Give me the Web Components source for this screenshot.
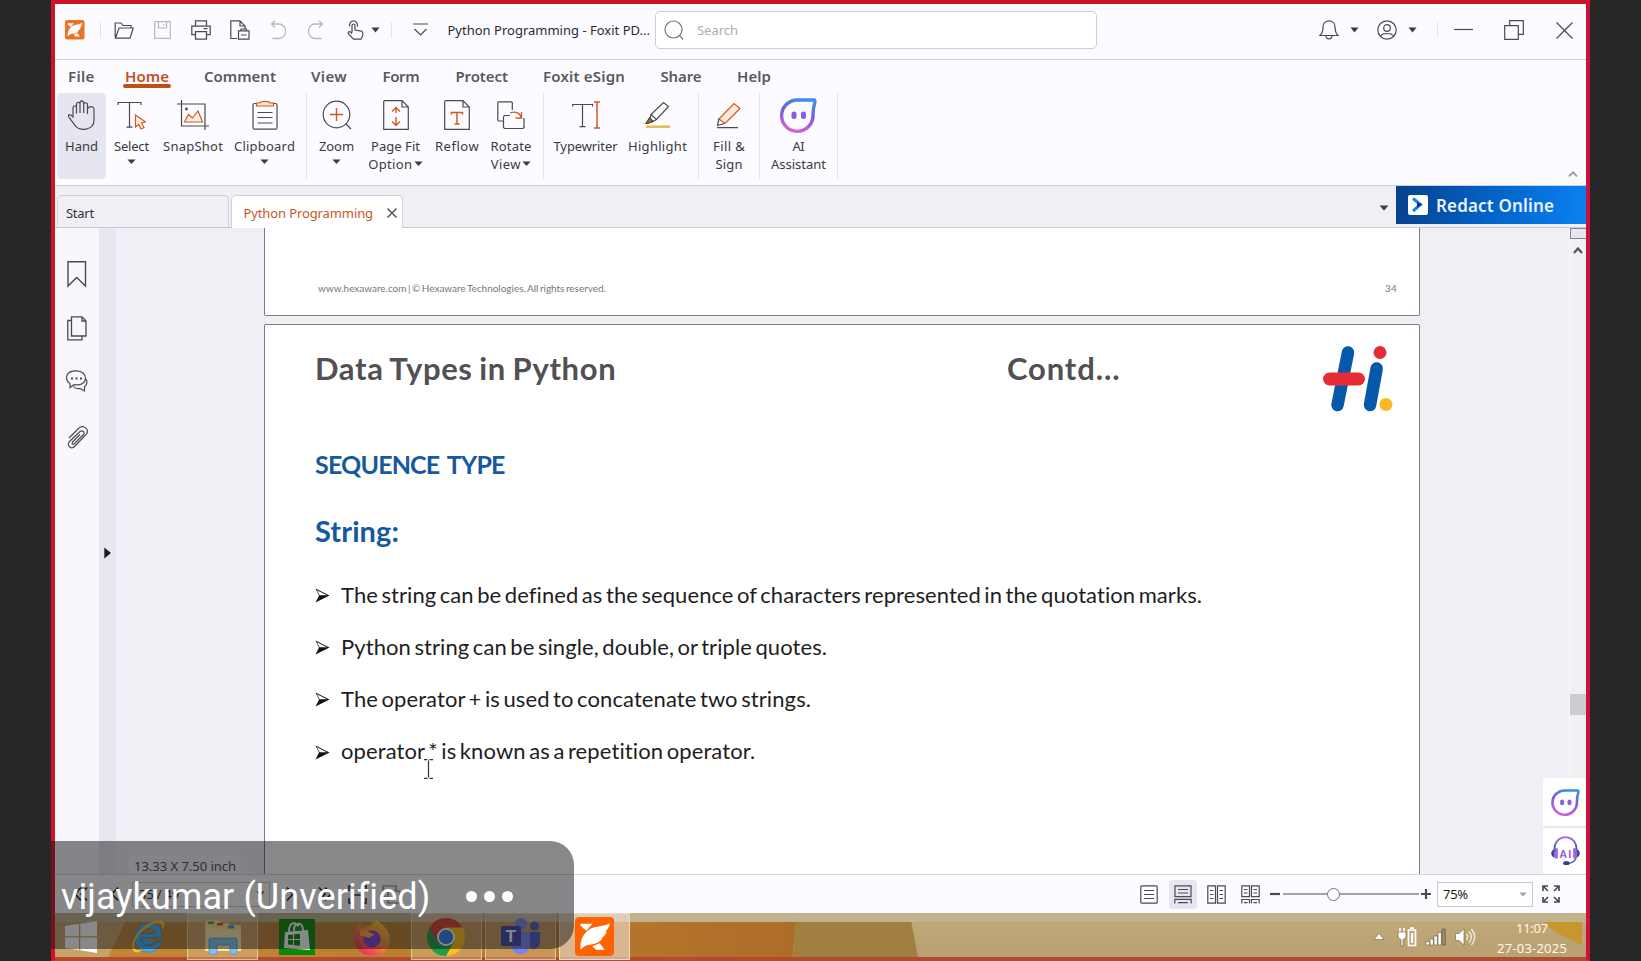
<!DOCTYPE html>
<html lang="en">
<head>
<meta charset="utf-8">
<title>Python Programming - Foxit PDF Reader</title>
<style>
html,body{margin:0;height:100%;background:#272727;overflow:hidden}
</style>
</head>
<body>
<shared-screen></shared-screen>
<script>
const define=(name,html,after)=>{
  const t=document.createElement('template');t.innerHTML=html;
  customElements.define(name,class extends HTMLElement{
    constructor(){super();this.attachShadow({mode:'open'}).append(t.content.cloneNode(true));}
    connectedCallback(){after&&after(this,this.shadowRoot);}
  });
};

/* One line of text whose tracking is tuned to fill a given width. */
define('fit-text',`<style>:host{display:inline-block;white-space:pre;flex:none}span{display:inline-block}</style><span></span>`,(el,root)=>{
  const s=root.querySelector('span'),w=+el.getAttribute('w'),f=el.getAttribute('size');
  s.textContent=el.getAttribute('text');
  if(f)el.style.fontSize=f+'px';
  el.style.width=w+'px';
  const n=s.textContent.length-1,nat=s.getBoundingClientRect().width;
  if(n>0)s.style.letterSpacing=((w-nat)/(n+0.5)).toFixed(3)+'px';
});

const ai=(id)=>`<defs><linearGradient id="${id}" x1=".7" y1="0" x2=".4" y2="1"><stop offset="0" stop-color="#3d8fe8"/><stop offset=".45" stop-color="#7a5cdc"/><stop offset="1" stop-color="#cf63d8"/></linearGradient></defs><path d="M33.5 2H17.5A15.7 15.7 0 1 0 32 17.500C32 11 33 7 34 3.500Z" stroke="url(#${id})" stroke-width="3.400" stroke-linejoin="round"/><rect x="10.500" y="13.500" width="5" height="7.500" rx="2.500" fill="#8460e0" stroke="none"/><rect x="20" y="13.500" width="5" height="7.500" rx="2.500" fill="#8460e0" stroke="none"/>`;
const foxit=(c)=>`<rect width="38" height="38" rx="4" fill="${c}" stroke="none"/><path d="M5 8C5 6.500 6 6.500 7 6.500H17L11 13.500ZM34 6C33 10 32 12 29.500 14.500H31C29.500 17.500 28 19 25.500 20.500H27C24 25 20 26.500 14 27C11 27.500 8 29 5.500 32C4.500 23 8 15 16 11C22 8.500 29 9 34 6ZM17 28.500L24 25.500L29 32H20.500Z" fill="#fff" stroke="none"/>`;
const ICONS={
  logo:['0 0 38 38',foxit('#ec7227')],
  foxit:['0 0 38 38',foxit('#ff6200')],
  open:['0 0 20 19','<path d="M1.200 16.500V2H7L9 4.500H17V7M1.500 17.200L5 7H19.200L16 17.200Z"/>'],
  save:['0 0 17 18','<path d="M.7.7H16.300V17.300H.7ZM4.500.7V7H12.500V.7M10 3V4.500" stroke="#b9b8c0"/>'],
  print:['0 0 20 20','<path d="M4.500 6V.8H15.500V6M4.500 14.500H.8V6H19.200V14.500H15.500M4.500 11.500H15.500V19.200H4.500ZM12.500 8.700H16.500" stroke-width="1.250"/>'],
  convert:['0 0 20 20','<path d="M7 18.500H.8V.8H10L15 6V9M10 .8V6H15M8.500 10.800H19V19.200H8.500ZM11 10.800V9H16.500V10.800M11 15H16.500" stroke-width="1.200"/>'],
  undo:['0 0 17 20','<path d="M5 .8L1.500 4L5 7.500M1.500 4H8.500C18 4 18 18.500 8.500 18.500H2.500" stroke="#b9b8c0" stroke-width="1.300"/>'],
  redo:['0 0 17 20','<path d="M12 .8L15.500 4L12 7.500M15.500 4H8.500C-1 4 -1 18.500 8.500 18.500H14.500" stroke="#b9b8c0" stroke-width="1.300"/>'],
  touch:['0 0 17 20','<path d="M5 12.500V5.500C5 3.500 8 3.500 8 5.500V10L14.500 11.200C16.500 11.800 16 14 15.500 16L14 19.200H6.500L1.200 13.500C.8 12 2.500 11 3.500 12L5 13.500M2.500 6.500C1.500 -1 11.500 -1 10.500 6.500"/>'],
  caret:['0 0 10 6','<path d="M.5.500H9.500L5 5.500Z" fill="#3b3b40" stroke="none"/>'],
  graycaret:['0 0 10 6','<path d="M.5.500H9.500L5 5.500Z" fill="#a0a0a6" stroke="none"/>'],
  more:['0 0 15 14','<path d="M0 1H15M1.500 6L7.500 12L13.500 6"/>'],
  search:['0 0 20 20','<circle cx="9.500" cy="9.500" r="8.500" stroke="#77777c"/><path d="M15.700 15.700L19 19.500" stroke="#77777c"/>'],
  bell:['0 0 20 20','<path d="M1 15.500C3.500 13 4 11 4 7C4-1.200 16-1.200 16 7C16 11 16.500 13 19 15.500ZM7 15.500C7 20 13 20 13 15.500"/>'],
  user:['0 0 20 20','<circle cx="10" cy="10" r="9.200"/><circle cx="10" cy="8" r="3.300"/><path d="M3.500 16.500C5 12.500 15 12.500 16.500 16.500"/>'],
  min:['0 0 19 20','<path d="M0 9.500H19"/>'],
  restore:['0 0 20 20','<path d="M.7 5.700H14.300V19.300H.7ZM5.700 5.500V.7H19.300V14.300H14.500"/>'],
  close:['0 0 17 17','<path d="M.5.500L16.500 16.500M16.500.500L.5 16.500"/>'],
  hand:['0 0 30 30','<path d="M6 17.500V8C6 5 9.500 5 9.500 8V13.500V4.500C9.500 1.500 13 1.500 13 4.500V13V3.200C13 0 16.700 0 16.700 3.200V13V5C16.700 2 20.500 2 20.500 5V14V9.500C20.500 6.500 27 5 27 9.500V20C27 31 12 31 9 26.500C6 23 4 20 1.500 16.500C1 14 4 13.500 6 17.500"/>'],
  select:['0 0 30 30','<path d="M1 5V2.500H24V5M12.500 2.500V27M9.500 27.200H15.500"/><path d="M18.500 15L28.500 22L24.500 23L27 27.500L24 29L21.700 24.500L18.500 27Z" stroke="#cf5a26" fill="#fff0e4"/>'],
  snapshot:['0 0 32 30','<path d="M0 4H28V27M4.500 0V26H32M28 22V30"/><circle cx="9.500" cy="9" r=".8" fill="#444"/><path d="M7.500 22L11.500 14.500L15.500 18L21 11L25.500 22Z" stroke="#cf5a26" fill="#fff0e4"/>'],
  clipboard:['0 0 26 30','<rect x="1" y="3.500" width="24" height="25.700" rx="1.500"/><path d="M5.500 12.500H20.500M5.500 17.500H20.500M5.500 23H20.500"/><path d="M4.500 6V3H8C8.500 .8 17.500 .8 18 3H21.500V6Z" stroke="#cf5a26" fill="#ffe5cc"/>'],
  zoom:['0 0 30 30','<circle cx="14.500" cy="14.500" r="13.300"/><path d="M24 24L29 29"/><path d="M8 14.500H21M14.500 8V21" stroke="#cf5a26" stroke-width="1.400"/>'],
  pagefit:['0 0 26 30','<path d="M1.500.7H19L25.300 7V29.300H.7V1.500ZM19 .7V7H25.300"/><path d="M13 8V13M13 17V25M9 11.500L13 7.500L17 11.500M9 21.500L13 25.500L17 21.500" stroke="#cf5a26" stroke-width="1.400"/>'],
  reflow:['0 0 26 30','<path d="M1.500.7H19L25.300 7V29.300H.7V1.500ZM19 .7V7H25.300"/><path d="M7.500 14.500V12.500H18.500V14.500M13 12.500V24M10.500 24H15.500" stroke="#cf5a26" stroke-width="1.500"/>'],
  rotate:['0 0 28 29','<path d="M6 20H1.500L.8 19V1.500L1.500.8H14.500L15.300 1.500V9M6.500 15.500L7.500 14.500H13M27 17V26.500L26 27.500H7.500L6.500 26.500V15.500"/><path d="M13 12C19 10 23.500 12 24 17M24.500 11V17H18.500" stroke="#cf5a26" stroke-width="1.300"/>'],
  type:['0 0 28 28','<path d="M.7 5.500V3.500H20.500V5.500M10.500 3.500V25.500M7.500 25.700H13.500"/><path d="M25 1V27M22 1H28M22 27H28" stroke="#cf5a26" stroke-width="1.500"/>'],
  highlight:['0 0 26 28','<path d="M6 13.500L18.500 1.500L23.500 5.500L11.500 18.500ZM6 13.500L4.500 19L7 21L11.500 18.500"/><path d="M4.500 17L8 20L3 22.500H1Z" fill="#9a7a22" stroke="#4a4530"/><path d="M1 25.700H25" stroke="#e3bd47" stroke-width="2.400"/>'],
  fill:['0 0 26 27','<path d="M3 17L18 1.500L24 6.500L9 21.500Z" stroke="#cf5a26" fill="#ffe9d6"/><path d="M3 16.500L1.500 23.500L8.500 21.500M1 25.700H22"/>'],
  ai:['0 0 36 35',ai('g')],
  headset:['0 0 32 32','<defs><linearGradient id="h" x1="0" x2="0" y1="0" y2="1"><stop stop-color="#b06be0"/><stop offset="1" stop-color="#2d4fa8"/></linearGradient></defs><path d="M4 16C2-3.500 30-3.500 28 16" stroke="url(#h)" stroke-width="2"/><path d="M28 22C27 27 23 29 18 29.500" stroke="#4a63b4" stroke-width="1.600"/><rect x="13.500" y="27" width="7" height="4" rx="2" fill="#2f3f98" stroke="none"/><path d="M4 14C-1 15-1 22 4 23Z M28 14C33 15 33 22 28 23Z" fill="#2e489c" stroke="none"/><path d="M4 13H7.500V24H4ZM24.500 13H28V24H24.500Z" fill="#a860dc" stroke="none"/><text x="9" y="23" font-family="Liberation Sans" font-weight="bold" font-size="12" letter-spacing="1.500" fill="#9a62d8" stroke="none">AI</text>'],
  up:['0 0 10 6','<path d="M1 5.300L5 1.300L9 5.300" stroke="#99989e" stroke-width="1.800"/>'],
  scrollup:['0 0 10 8','<path d="M1 7L5 2.500L9 7" stroke="#55555a" stroke-width="2.200"/>'],
  x:['0 0 10 10','<path d="M.5.500L9.500 9.500M9.500.500L.5 9.500" stroke="#55555a" stroke-width="1.500"/>'],
  redact:['0 0 20 20','<rect width="20" height="20" rx="2" fill="#fff" stroke="none"/><path d="M5 3.500L12.500 9.500L5 16" stroke="#1687ea" stroke-width="3"/><path d="M9 7L14 9.500L9 12.500Z" fill="#082d70" stroke="none"/>'],
  bookmark:['0 0 20 26','<path d="M1 .8H18.500V25L9.700 16.500L1 25Z" stroke-width="1.400"/>'],
  pages:['0 0 20 25','<path d="M4.500 4.500H.8V23.800H15V20.500M4.500.8H15L19 5V20H4.500ZM15 .8V5H19" stroke-width="1.300"/>'],
  comments:['0 0 22 22','<path d="M4 13.500V17.500L8 14.700C23 17 23 .8 10 .8C-1 .8-1.500 10 4 13.500M20 9C22.500 13 20 15.500 18.500 17V21L14.500 18.500C11 19 8.500 18 7.500 16.500"/><path d="M5 8.500H7M9.500 8.500H11.500M14 8.500H16" stroke-width="2"/>'],
  clip:['0 0 22 24','<path d="M2 12L12 2C17-2 23 4 19 8.500L8 20C4.500 24-1 20 2.500 15.500L13 5.500C16 3.500 18 6.500 16.500 8.500L7 18C5.500 19 4.500 17.500 5.500 16L13 8.500"/>'],
  play:['0 0 7 12','<path d="M.3.500L7 6L.3 11.500Z" fill="#1d1d20" stroke="none"/>'],
  hi:['0 0 70 66','<path d="M25 6.500L14.500 59M53.700 22.500L47 59" stroke="#0558aa" stroke-width="12.500" stroke-linecap="round"/><path d="M6.500 33H35.500" stroke="#e62d36" stroke-width="13" stroke-linecap="round"/><circle cx="57" cy="6.500" r="6.500" fill="#e62d36" stroke="none"/><circle cx="63" cy="58.500" r="6.500" fill="#fbb822" stroke="none"/>'],
  arrow:['0 0 15 15','<path d="M.5.500L14.500 7.500L.5 14.500L4 7.500Z" fill="#111" stroke="none"/><path d="M2 2.300L12 7.300H4.600Z" fill="#fff" stroke="none"/>'],
  ibeam:['0 0 9 20','<path d="M0 .7H3.500M5.500.7H9M0 19.300H3.500M5.500 19.300H9M4.500 1.500V18.500" stroke="#333"/>'],
  v1:['0 0 18 19','<rect x=".8" y=".8" width="16.400" height="17.400" rx="1"/><path d="M4 5.500H14M4 9.500H14M4 13.500H14"/>'],
  v2:['0 0 18 19','<path d="M1 .8H17V11.700H1ZM4 4.500H14M4 8H14M.8 18.500V14.300H17.200V18.500M4 17.700H14"/>'],
  v3:['0 0 19 19','<path d="M.8.8H8.500V18.200H.8ZM10.500.8H18.200V18.200H10.500ZM3 5.500H6.500M3 9.500H6.500M3 13.500H6.500M12.500 5.500H16M12.500 9.500H16M12.500 13.500H16"/>'],
  v4:['0 0 19 19','<path d="M.8.8H8.500V11.700H.8ZM10.500.8H18.200V11.700H10.500ZM3 4.500H6.500M3 8H6.500M12.500 4.500H16M12.500 8H16M.8 18.500V14.500H8.500V18.500M10.500 18.500V14.500H18.200V18.500M3 17.700H6.500M12.500 17.700H16"/>'],
  minus:['0 0 10 10','<path d="M0 5H10" stroke-width="2.200"/>'],
  plus:['0 0 10 10','<path d="M0 5H10M5 0V10" stroke-width="2.200"/>'],
  full:['0 0 18 18','<path d="M1 6V1H6M1 1L6 6M12 1H17V6M17 1L12 6M1 12V17H6M1 17L6 12M17 12V17H12M17 17L12 12" stroke-width="1.700"/>'],
  dleft:['0 0 14 14','<path d="M7 .5L1 7L7 13.500M13 .5L7 7L13 13.500" stroke="#222" stroke-width="1.700"/>'],
  left:['0 0 8 14','<path d="M7 .5L1 7L7 13.500" stroke="#222" stroke-width="1.700"/>'],
  right:['0 0 8 14','<path d="M1 .5L7 7L1 13.500" stroke="#222" stroke-width="1.700"/>'],
  dright:['0 0 14 14','<path d="M1 .5L7 7L1 13.500M7 .5L13 7L7 13.500" stroke="#222" stroke-width="1.700"/>'],
  crop:['0 0 19 19','<path d="M1 6V1H6M13 1H18V6M1 13V18H6M18 13V18H13M11 4L15 7M6 10H14V15" stroke="#222" stroke-width="1.500"/>'],
  copy:['0 0 19 19','<path d="M6 12H1V1H14V6M6 6H18V18H6Z" stroke="#777"/>'],
  win:['0 0 32 32','<path d="M0 5L14 3V15.300H0ZM15.300 2.800L32 0V15.300H15.300ZM0 16.500H14V29L0 27ZM15.300 16.500H32V32L15.300 29.200Z" fill="#fff" stroke="none"/>'],
  ie:['0 0 38 38','<path d="M29 23.500C26 31 12 31 11.500 20H34C35 9 27 5 20 5C11 5 5 12 5 20C5 29 11 35 20 35C27 35 32 30.500 33.500 24.500H26C22 30 12 28 12.500 20M12 16C14 9 26 9 27 16Z" fill="#45b2ea" stroke="#2c83c0" stroke-width=".6" fill-rule="evenodd"/><path d="M5 35C-2 30 5 16 15 9C24 2 34-1 36 5C37 8 35 11 34 12C35 5 30 3 21 8C10 14 2 25 5 31C6 34 10 33 13 32C10 35 8 36 5 35Z" fill="#f6c62f" stroke="none"/>'],
  explorer:['0 0 38 34','<path d="M1 3L3 0H15L17 3H24L26 5H37V31H1Z" fill="#f4dd88" stroke="none"/><path d="M4 1.500H10V4H4Z" fill="#2faa4a" stroke="none"/><path d="M13 3H19V5.500H13Z" fill="#d9472c" stroke="none"/><path d="M24 5.500H30V8.500H24Z" fill="#2e8fdc" stroke="none"/><path d="M2 8L37 10V31H2Z" fill="#f8e8a8" stroke="none"/><path d="M5 20C5 18 7 18 9 18H30C32 18 33 18 33 20V34H26V25H13V34H5Z" fill="#7cc4ea" stroke="#4b9cce" stroke-width=".8"/>'],
  store:['0 0 36 36','<path d="M0 0H36V36H0Z" fill="#0a8a0a" stroke="none"/><path d="M6 13L29 11L31 31L5 29Z" fill="#fff" stroke="none"/><path d="M10 13C10 3 16 3 18 6C20 3 24 5 24 12M15 12C15 6 17 4 20 7" stroke="#fff" stroke-width="1.800"/><path d="M9 16L14 15.500V20H9ZM15 15.300L21 14.700V20H15ZM9 21H14V26L9 25.400ZM15 21H21V26.800L15 26.200Z" fill="#0a8a0a" stroke="none"/>'],
  firefox:['0 0 38 38','<defs><linearGradient id="f" x1="1" x2=".2" y1="0" y2="1"><stop stop-color="#ffe640"/><stop offset=".45" stop-color="#ff9430"/><stop offset="1" stop-color="#f02468"/></linearGradient></defs><path d="M3 11L7 5L9 10C12 7 15 8 18 8C19 4 22 2 24 0C25 5 31 7 34 12C41 25 34 37 20 37.500C5 38-2 24 3 11Z" fill="url(#f)" stroke="none"/><circle cx="19" cy="21" r="8.500" fill="#7a3fd0" stroke="none"/><path d="M7 13C12 11 15 13 18 15L22 16L16 20C13 20 12 17 7 18Z" fill="#ffa630" stroke="none"/>'],
  chrome:['0 0 38 38','<circle cx="19" cy="19" r="19" fill="#fbc116" stroke="none"/><path d="M19 19L2.500 9.500A19 19 0 0 0 19 38L27 23.500Z" fill="#1e9e4c" stroke="none"/><path d="M2.500 9.500A19 19 0 0 1 35.500 9.500H19L10.800 23.700Z" fill="#dc3c30" stroke="none"/><circle cx="19" cy="19" r="9" fill="#fff" stroke="none"/><circle cx="19" cy="19" r="7.200" fill="#2f7ee8" stroke="none"/>'],
  teams:['0 0 39 37','<circle cx="20" cy="6" r="6" fill="#7b83eb" stroke="none"/><circle cx="33.500" cy="8" r="4.500" fill="#5059c9" stroke="none"/><path d="M27 14H39V24C39 30 34 32 29 30Z" fill="#5059c9" stroke="none"/><path d="M10 14H29V26C29 40 10 40 10 26Z" fill="#7b83eb" stroke="none"/><rect y="8" width="20" height="20" rx="1.500" fill="#3f46b0" stroke="none"/><text x="4.500" y="24" font-family="Liberation Sans" font-weight="bold" font-size="17" fill="#fff" stroke="none">T</text>'],
  tray:['0 0 10 7','<path d="M5 .5L10 6.500H0Z" fill="#fff" stroke="#775f3f" stroke-width=".6"/>'],
  power:['0 0 19 20','<path d="M2 1V5M6 1V5" stroke="#fff" stroke-width="1.600"/><path d="M0 5H8V9C8 11 6 12 5 12.500V19H3V12.500C2 12 0 11 0 9Z" fill="#fff" stroke="#6a5a40" stroke-width=".6"/><path d="M10.500 3H17.500V18.500H10.500ZM12 1.200H16" stroke="#fff" stroke-width="1.700"/><path d="M13 6H15.200V16H13Z" fill="#fff" stroke="none"/>'],
  signal:['0 0 20 16','<path d="M0 12.500H3.300V16H0ZM4 10H7.300V16H4ZM8 7H11.300V16H8ZM12 3.500H15.300V16H12Z" fill="#fff" stroke="#6a5a40" stroke-width=".6"/><path d="M16 0H19.300V16H16Z" fill="#9c8a6a" stroke="#5d4f38" stroke-width=".6"/>'],
  sound:['0 0 20 18','<path d="M.5 5.500H4L9 .8V17.200L4 12.500H.5Z" fill="#fff" stroke="#6a5a40" stroke-width=".6"/><path d="M11.500 6C13 8 13 10 11.500 12M14 3.500C17 7 17 11 14 14.500M16.500 1C20.500 6 20.500 12 16.500 17" stroke="#f4efe4" stroke-width="1.300"/>']
};
define('app-icon',`<style>:host{display:inline-block;flex:none}svg{display:block;overflow:visible}</style><span></span>`,(el,root)=>{
  const [vb,body]=ICONS[el.getAttribute('name')],[,,w,h]=vb.split(' ');
  const W=el.getAttribute('w')||w,H=el.getAttribute('h')||h;
  el.style.width=W+'px';el.style.height=H+'px';
  root.querySelector('span').innerHTML=`<svg width="${W}" height="${H}" viewBox="${vb}" preserveAspectRatio="none" fill="none" stroke="#4b4a50" stroke-width="1.200">${body}</svg>`;
});
define('v-rule',`<style>:host{display:block;width:1px;flex:none;background:#e4e3ea}</style>`);

define('title-bar',`<style>
:host{display:flex;align-items:center;height:52px;padding:0 0 3px 10px;border-bottom:1px solid #cfced6;color:#2c2c30;font-size:13px}
v-rule{height:16px}
.search{display:flex;align-items:center;box-sizing:border-box;width:442px;height:38px;border:1px solid #cfced6;border-radius:5px;padding-left:8px;margin-left:5px;background:#fff;color:#adacb2}
.search fit-text{margin-left:13px}
</style>
<app-icon name="logo" w="19.500" h="19.500"></app-icon>
<v-rule style="margin-left:15.500px"></v-rule>
<app-icon name="open" style="margin-left:13px"></app-icon>
<app-icon name="save" style="margin-left:20px"></app-icon>
<app-icon name="print" style="margin-left:20px"></app-icon>
<app-icon name="convert" style="margin-left:19px"></app-icon>
<app-icon name="undo" style="margin-left:19.500px"></app-icon>
<app-icon name="redo" style="margin-left:20.500px"></app-icon>
<app-icon name="touch" style="margin-left:23px"></app-icon>
<app-icon name="caret" w="9" h="6" style="margin-left:7px"></app-icon>
<v-rule style="margin-left:11px"></v-rule>
<app-icon name="more" style="margin-left:21px"></app-icon>
<fit-text style="margin-left:19.500px" w="202.500" text="Python Programming - Foxit PD..."></fit-text>
<div class="search"><app-icon name="search"></app-icon><fit-text w="41" text="Search"></fit-text></div>
<app-icon name="bell" style="margin-left:222px"></app-icon>
<app-icon name="caret" w="9" h="6" style="margin-left:11px"></app-icon>
<app-icon name="user" style="margin-left:17.500px"></app-icon>
<app-icon name="caret" w="9" h="6" style="margin-left:11px"></app-icon>
<v-rule style="margin-left:20px"></v-rule>
<app-icon name="min" style="margin-left:16px"></app-icon>
<app-icon name="restore" style="margin-left:31px"></app-icon>
<app-icon name="close" style="margin-left:32px"></app-icon>`);

define('menu-row',`<style>:host{display:flex;padding:4.500px 0 0 13px;height:28.500px}
div{font-weight:600;line-height:22px;color:#5a595e}
.on{color:#c4511c}
i{display:block;height:3.500px;margin:-2.500px -2px 0;border-radius:2px;background:#c24e18}</style>`,(el,root)=>{
  let x=68;
  for(const [t,a,b] of [['File',68,94.500],['Home',125,169],['Comment',204,276],['View',311,347],['Form',382.500,419.500],['Protect',455.500,508],['Foxit eSign',543,625],['Share',660.500,701.500],['Help',737,771]]){
    const d=document.createElement('div'),on=t=='Home';
    d.style.marginLeft=a-x+'px';
    if(on)d.className='on';
    d.innerHTML=`<fit-text size="15" w="${b-a}" text="${t}"></fit-text>${on?'<i></i>':''}`;
    root.append(d);x=b;
  }
});

define('tool-button',`<style>
:host{display:flex;flex-direction:column;align-items:center;box-sizing:border-box;height:86px;flex:none;border-radius:4px;color:#3a3a3f;font-size:13px;line-height:18px}
:host([active]){background:#e5e6ef}
.i{display:flex;align-items:center;height:31px;margin:6.500px 0}
.r{display:flex;align-items:center;gap:1.500px;height:18px}
</style><div class="i"></div>`,(el,root)=>{
  const a=n=>el.getAttribute(n);
  el.style.width=a('w')+'px';
  root.querySelector('.i').innerHTML=`<app-icon name="${a('icon')}"></app-icon>`;
  a('rows').split('|').forEach(s=>{
    const [t,w,c]=s.split(':'),d=document.createElement('div');d.className='r';
    const car='<app-icon name="caret" w="9" h="5.500"></app-icon>';
    d.innerHTML=t?`<fit-text w="${w}" text="${t.replace('&','&amp;')}"></fit-text>${c?car:''}`:`<app-icon name="caret" w="9" h="5.500" style="margin-top:-4px"></app-icon>`;
    root.append(d);
  });
});
define('tool-ribbon',`<style>:host{display:flex;height:92px;padding-left:2px;border-bottom:1px solid #cfced6;position:relative}
v-rule{height:86px;margin:0 5px}.up{position:absolute;right:8px;top:78px}</style>
<tool-button active w="49" icon="hand" rows="Hand:33"></tool-button>
<tool-button w="51" icon="select" rows="Select:35|"></tool-button>
<tool-button w="72" icon="snapshot" rows="SnapShot:60"></tool-button>
<tool-button w="71" icon="clipboard" rows="Clipboard:61|"></tool-button>
<v-rule style="margin:0 5px 0 6px"></v-rule>
<tool-button w="49" icon="zoom" rows="Zoom:35|"></tool-button>
<tool-button w="69" icon="pagefit" rows="Page Fit:49|Option:44:1"></tool-button>
<tool-button w="54" icon="reflow" rows="Reflow:44"></tool-button>
<tool-button w="54" icon="rotate" rows="Rotate:41|View:30:1"></tool-button>
<v-rule></v-rule>
<tool-button w="73" icon="type" rows="Typewriter:64"></tool-button>
<tool-button w="71" icon="highlight" rows="Highlight:59"></tool-button>
<v-rule></v-rule>
<tool-button w="50" icon="fill" rows="Fill &:32|Sign:27"></tool-button>
<v-rule></v-rule>
<tool-button w="67" icon="ai" rows="AI:12|Assistant:55"></tool-button>
<v-rule></v-rule>
<app-icon class="up" name="up"></app-icon>`);

define('tab-strip',`<style>
:host{display:flex;align-items:flex-start;height:41px;background:#f0eff6;border-bottom:1px solid #c9c9d4;color:#333338;font-size:13px;line-height:18px}
.tab{box-sizing:border-box;display:flex;align-items:center;height:32px;margin-top:9px;border:1px solid #d0d0dd;border-bottom:0;border-radius:5px 5px 0 0;padding-top:3px}
.start{width:172px;margin-left:2px;padding-left:8px}
.doc{width:172px;height:33px;margin-left:2px;padding:2px 0 0 11.500px;background:#fff;color:#c4571f;gap:14px}
.promo{display:flex;align-items:center;box-sizing:border-box;width:190px;height:38px;padding-left:12px;gap:8px;background:linear-gradient(100deg,#07408c,#0263c8 50%,#0a82f2);color:#e8f3ff;font-weight:600;font-size:17px}
.promo fit-text{margin-top:1px}
.c{margin:19px 7px 0 auto}
</style>
<div class="tab start"><fit-text w="28" text="Start"></fit-text></div>
<div class="tab doc"><fit-text w="129.500" text="Python Programming"></fit-text><app-icon name="x"></app-icon></div>
<app-icon class="c" name="caret" w="10" h="6"></app-icon>
<div class="promo"><app-icon name="redact"></app-icon><fit-text w="118" text="Redact Online"></fit-text></div>`);

define('side-bar',`<style>:host{display:flex;flex:none;width:61px;background:#f8f7fd}
.icons{width:44px;display:flex;flex-direction:column;align-items:center}
.strip{width:17px;background:#e6e7f0;display:flex;align-items:flex-start;justify-content:center}
</style>
<div class="icons"><app-icon name="bookmark" style="margin-top:33px"></app-icon><app-icon name="pages" style="margin-top:28.500px"></app-icon><app-icon name="comments" style="margin-top:29px"></app-icon><app-icon name="clip" style="margin-top:34px;margin-left:2px"></app-icon></div>
<div class="strip"><app-icon name="play" style="margin-top:318.500px"></app-icon></div>`);

define('slide-bullet',`<style>:host{display:flex;align-items:center;height:52.200px;color:#1e1e22;font-size:22px;line-height:30px;word-spacing:-2.200px;gap:11px}</style><app-icon name="arrow" style="margin-top:2px"></app-icon>`,(el,root)=>{
  const f=document.createElement('fit-text');
  f.setAttribute('w',el.getAttribute('w'));f.setAttribute('text',el.getAttribute('text'));
  root.append(f);
});
define('page-view',`<style>
:host{display:flex;flex-direction:column;flex:1;padding-left:148px;background:#f0eff6;overflow:hidden;position:relative;font-family:Lato,"Noto Sans",sans-serif}
.p{box-sizing:border-box;flex:none;width:1156px;background:#fff;border:1.500px solid #7b7b80}
.prev{height:88px;border-top:0;border-radius:0 0 2px 2px;display:flex;justify-content:space-between;padding:53px 22px 0 53px;font-size:10px;line-height:14px;color:#77777b;word-spacing:-1px}
.cur{height:600px;margin-top:7.500px;border-radius:2px;padding:0 0 0 50px}
.head{display:flex;align-items:flex-start;height:105px;color:#515155;font-weight:bold;font-size:31px;line-height:40px;padding-top:23px;word-spacing:-1.500px}
.head app-icon{margin-left:203px;margin-top:-2px}
.blue{color:#15599f;font-weight:bold;display:block}
.cursor{position:absolute;left:308px;top:531px}
.size{position:absolute;left:13px;top:627px;padding:2px 5px;font:13px/18px "Noto Sans",sans-serif;color:#4c4c50;background:#f6f5fa}
</style>
<div class="p prev"><fit-text w="288" text="www.hexaware.com | © Hexaware Technologies. All rights reserved."></fit-text><fit-text w="12" text="34"></fit-text></div>
<div class="p cur">
<div class="head"><fit-text w="301" text="Data Types in Python"></fit-text><fit-text w="113" text="Contd..." style="margin-left:391px"></fit-text><app-icon name="hi"></app-icon></div>
<fit-text class="blue" size="25" w="190" text="SEQUENCE TYPE" style="line-height:32px;margin-top:-5px;word-spacing:3px"></fit-text>
<fit-text class="blue" size="29" w="84" text="String:" style="line-height:36px;margin-top:33px;margin-bottom:20px"></fit-text>
<slide-bullet w="861" text="The string can be defined as the sequence of characters represented in the quotation marks."></slide-bullet>
<slide-bullet w="486" text="Python string can be single, double, or triple quotes."></slide-bullet>
<slide-bullet w="470" text="The operator + is used to concatenate two strings."></slide-bullet>
<slide-bullet w="415" text="operator * is known as a repetition operator."></slide-bullet>
</div>
<app-icon class="cursor" name="ibeam"></app-icon>
<div class="size"><fit-text w="102" text="13.33 X 7.50 inch"></fit-text></div>`);

define('scroll-rail',`<style>:host{display:flex;flex-direction:column;align-items:center;flex:none;width:17px;background:#f1f0f3;border-left:1px solid #fafafc;box-sizing:border-box}
.split{box-sizing:border-box;width:100%;height:10.500px;border:1px solid #85858d;border-right:0;background:#e5e6ef}
.thumb{width:100%;height:21px;margin-top:440px;background:#cdcccf}</style>
<div class="split"></div><app-icon name="scrollup" style="margin-top:7px"></app-icon><div class="thumb"></div>`);
define('ai-dock',`<style>:host{position:absolute;right:0;bottom:0;display:flex;flex-direction:column;width:43.500px;gap:1.500px;background:#e8e7ee}
div{height:48px;background:#fff;display:flex;align-items:center;justify-content:center;padding-left:3px}div+div{height:46.500px}</style>
<div><app-icon name="ai" w="28" h="27"></app-icon></div><div><app-icon name="headset" w="29" h="30"></app-icon></div>`);

define('status-bar',`<style>
:host{display:flex;align-items:center;box-sizing:border-box;height:39px;border-top:1.500px solid #d6d5dc;background:#fcfbff;padding-left:20px;font-size:13px;color:#1c1c20}
.page,.zoom{box-sizing:border-box;display:flex;align-items:center;justify-content:space-between;background:#fff;border:1px solid #c7c6ce;height:25px}
.page{width:138px;margin-left:13px;padding:0 4px 0 6px}
.zoom{width:96px;margin-left:6px;padding:0 5px}
.act{display:flex;padding:5px;margin-left:11px;border-radius:4px;background:#e5e6ef}
.track{display:flex;align-items:center;width:136px;height:1.500px;background:#a3a2a9;margin-left:3px}
.knob{box-sizing:border-box;width:13px;height:13px;border:1.500px solid #77767c;border-radius:50%;background:#fff;margin-left:44px}
</style>
<app-icon name="dleft" style="margin-left:-1px"></app-icon><app-icon name="left" style="margin-left:23px"></app-icon>
<div class="page"><fit-text w="40" text="35 / 49"></fit-text><app-icon name="caret" w="9" h="6"></app-icon></div>
<app-icon name="right" style="margin-left:16px"></app-icon><app-icon name="dright" style="margin-left:24px"></app-icon>
<app-icon name="crop" style="margin-left:16px"></app-icon><app-icon name="copy" style="margin-left:15px"></app-icon>
<app-icon name="v1" style="margin-left:auto"></app-icon>
<div class="act"><app-icon name="v2"></app-icon></div>
<app-icon name="v3" style="margin-left:10px"></app-icon>
<app-icon name="v4" style="margin-left:15px"></app-icon>
<app-icon name="minus" style="margin-left:10px"></app-icon>
<div class="track"><div class="knob"></div></div>
<app-icon name="plus" style="margin-left:2px"></app-icon>
<div class="zoom"><fit-text w="25" text="75%"></fit-text><app-icon name="graycaret" w="8" h="5"></app-icon></div>
<app-icon name="full" style="margin-left:9px;margin-right:26px"></app-icon>`);

define('task-bar',`<style>
:host{display:grid;height:47px;color:#fff8ee;position:relative}
svg,.row{grid-area:1/1;width:100%;height:47px}
.row{display:flex;align-items:center;box-sizing:border-box;padding-left:10px}
.b{box-sizing:border-box;display:flex;align-items:center;justify-content:center;width:71px;height:47px;border:1.500px solid rgba(240,225,200,.65);background:rgba(235,215,185,.32)}
.on{background:rgba(240,225,210,.6);border-color:#e9dccb}
.clock{display:flex;flex-direction:column;align-items:center;font-size:13px;line-height:20.500px;margin:3px 19px 0 22px}
</style>
<svg viewBox="0 0 1537 47" preserveAspectRatio="none"><defs><linearGradient id="o"><stop stop-color="#c3873a"/><stop offset=".5" stop-color="#bb802d"/><stop offset="1" stop-color="#ae6c29"/></linearGradient><linearGradient id="t" x1="0" x2="0" y1="0" y2="1"><stop stop-color="#c2a97a"/><stop offset="1" stop-color="#b9a072"/></linearGradient></defs>
<rect width="1537" height="47" fill="url(#t)"/><path d="M0 0H745L740 47H0Z" fill="url(#o)"/><path d="M0 0H75L52 47H0Z" fill="#c9a468"/><path d="M745 0H858L867 47H740Z" fill="#a07f40"/><path d="M1494 9H1533V32Q1510 23 1494 9Z" fill="#c7962d"/><rect width="1537" height="9" fill="#c2b28e"/><rect y="44" width="1537" height="3" fill="#b24c30"/></svg>
<div class="row">
<app-icon name="win"></app-icon>
<app-icon name="ie" w="36" h="37" style="margin-left:33px"></app-icon>
<div class="b" style="margin-left:21px"><app-icon name="explorer"></app-icon></div>
<app-icon name="store" style="margin-left:20.500px"></app-icon>
<app-icon name="firefox" style="margin-left:38px"></app-icon>
<div class="b" style="margin-left:20px"><app-icon name="chrome"></app-icon></div>
<div class="b" style="margin-left:3px"><app-icon name="teams"></app-icon></div>
<div class="b on" style="margin-left:3px"><app-icon name="foxit" w="39" h="39"></app-icon></div>
<app-icon name="tray" style="margin-left:auto"></app-icon>
<app-icon name="power" style="margin-left:14px"></app-icon>
<app-icon name="signal" style="margin-left:9px"></app-icon>
<app-icon name="sound" style="margin-left:9px"></app-icon>
<div class="clock"><fit-text w="32" text="11:07"></fit-text><fit-text w="70" text="27-03-2025"></fit-text></div>
</div>`);

define('name-badge',`<style>:host{position:absolute;left:51px;top:841px;width:523px;height:108px;box-sizing:border-box;padding:2px 61px 0 10px;display:flex;align-items:center;justify-content:space-between;border-radius:0 24px 24px 0;background:rgba(22,22,24,.51);color:#fff;font:36px/44px Roboto,sans-serif}
fit-text{margin-top:2px}
.d{display:flex;gap:7px}.d i{width:11px;height:11px;border-radius:50%;background:#fff}</style>
<fit-text w="368" text="vijaykumar (Unverified)"></fit-text><div class="d"><i></i><i></i><i></i></div>`);

define('shared-screen',`<style>
:host{display:block;position:relative;width:1641px;height:961px;background:#272727;font-family:"Noto Sans","Open Sans",sans-serif}
.win{box-sizing:border-box;display:flex;flex-direction:column;width:1539px;height:961px;margin-left:51px;border:solid #ce1426;border-width:4px 4px 1px 4px;border-right-color:#c9123c;border-bottom-color:#b24c30;background:#fcfbff}
.mid{display:flex;flex:1;min-height:0;position:relative}
</style>
<div class="win"><title-bar></title-bar><menu-row></menu-row><tool-ribbon></tool-ribbon><tab-strip></tab-strip>
<div class="mid"><side-bar></side-bar><page-view></page-view><scroll-rail></scroll-rail><ai-dock></ai-dock></div>
<status-bar></status-bar><task-bar></task-bar></div>
<name-badge></name-badge>`);
</script>
</body>
</html>
